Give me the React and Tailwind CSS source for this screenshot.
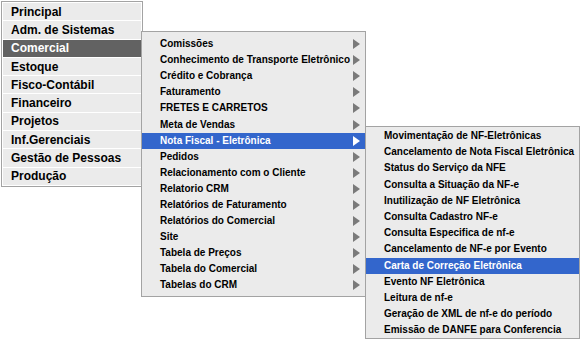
const mainItems = [
  "Principal",
  "Adm. de Sistemas",
  "Comercial",
  "Estoque",
  "Fisco-Contábil",
  "Financeiro",
  "Projetos",
  "Inf.Gerenciais",
  "Gestão de Pessoas",
  "Produção",
];

const comercialItems = [
  "Comissões",
  "Conhecimento de Transporte Eletrônico",
  "Crédito e Cobrança",
  "Faturamento",
  "FRETES E CARRETOS",
  "Meta de Vendas",
  "Nota Fiscal - Eletrônica",
  "Pedidos",
  "Relacionamento com o Cliente",
  "Relatorio CRM",
  "Relatórios de Faturamento",
  "Relatórios do Comercial",
  "Site",
  "Tabela de Preços",
  "Tabela do Comercial",
  "Tabelas do CRM",
];

const nfeItems = [
  "Movimentação de NF-Eletrônicas",
  "Cancelamento de Nota Fiscal Eletrônica",
  "Status do Serviço da NFE",
  "Consulta a Situação da NF-e",
  "Inutilização de NF Eletrônica",
  "Consulta Cadastro NF-e",
  "Consulta Especifica de nf-e",
  "Cancelamento de NF-e por Evento",
  "Carta de Correção Eletrônica",
  "Evento NF Eletrônica",
  "Leitura de nf-e",
  "Geração de XML de nf-e do período",
  "Emissão de DANFE para Conferencia",
];

const font = { fontFamily: '"Liberation Sans", Arial, sans-serif' };

const Arrow = ({ active }) => (
  <svg width="7" height="10" viewBox="0 0 7 10" className="shrink-0">
    <polygon points="0,0 7,5 0,10" fill={active ? "#ffffff" : "#7a7a7a"} />
  </svg>
);

const App = () => {
  return (
    <div className="relative h-[339px] w-[580px] overflow-hidden bg-white text-black" style={font}>
      {/* Main menu */}
      <div className="ml-[1px] mt-[1px] flex w-[142px] flex-col gap-[1px] border border-[#a3a3a3] bg-white p-[1px]">
        {mainItems.map((item) => (
          <div
            key={item}
            className={`flex h-[17.3px] items-center pl-[8px] text-[12px] font-bold leading-none ${
              item === "Comercial" ? "bg-[#626262] text-white" : "bg-[#ebebeb]"
            }`}
          >
            {item}
          </div>
        ))}
      </div>

      {/* Comercial submenu */}
      <div className="absolute left-[141px] top-[31px] flex w-[225px] flex-col border border-[#a3a3a3] bg-[#ebebeb] pb-[2px] pt-[4px]">
        {comercialItems.map((item) => {
          const active = item === "Nota Fiscal - Eletrônica";
          return (
            <div
              key={item}
              className={`flex h-[16.1px] items-center justify-between pl-[18px] pr-[5px] text-[10px] font-bold leading-none ${
                active ? "bg-[#3366cc] text-white" : ""
              }`}
            >
              <span>{item}</span>
              <Arrow active={active} />
            </div>
          );
        })}
      </div>

      {/* Nota Fiscal submenu */}
      <div className="absolute left-[365px] top-[126px] flex w-[215px] flex-col border border-[#a3a3a3] bg-[#ebebeb] pt-[1px]">
        {nfeItems.map((item) => (
          <div
            key={item}
            className={`flex h-[16.2px] items-center pl-[18px] text-[10px] font-bold leading-none ${
              item === "Carta de Correção Eletrônica" ? "bg-[#3366cc] text-white" : ""
            }`}
          >
            {item}
          </div>
        ))}
      </div>
    </div>
  );
};

export default App;
